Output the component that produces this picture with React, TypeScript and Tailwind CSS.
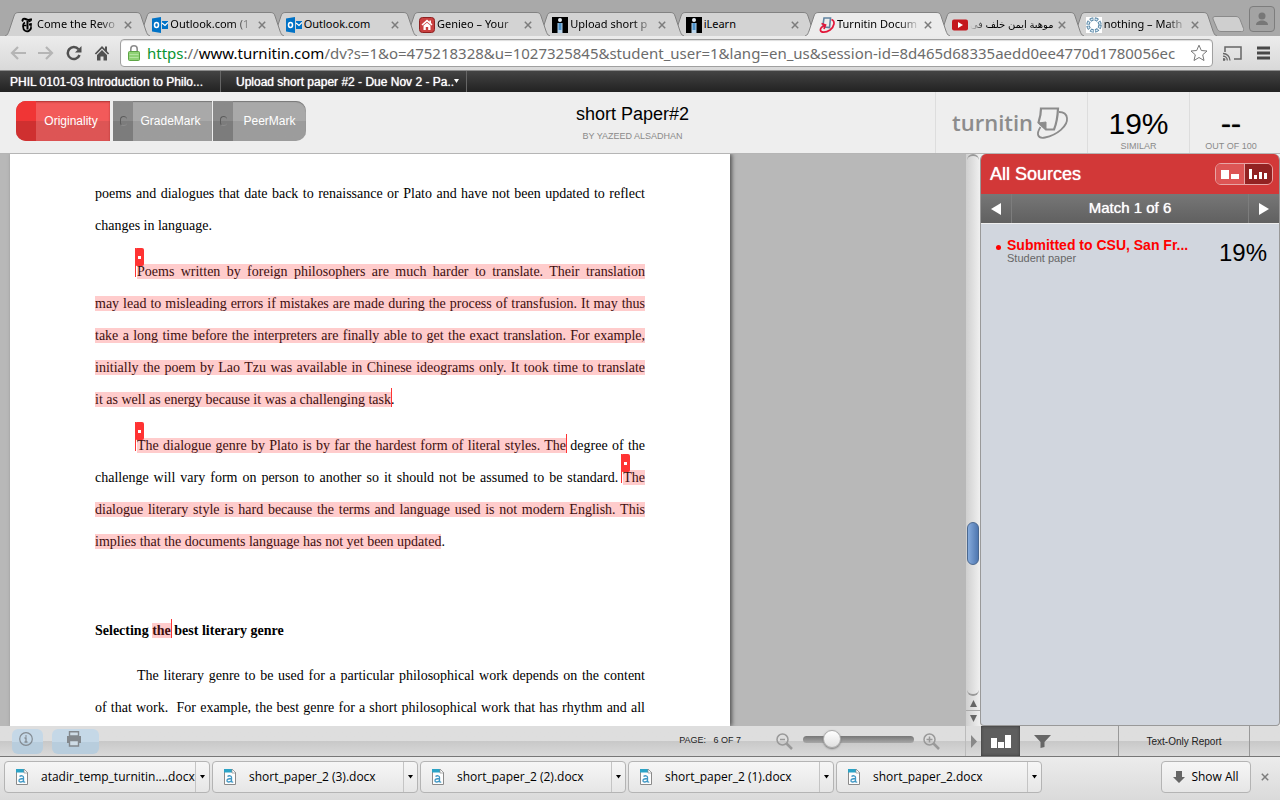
import type { ReactNode } from "react";
import clsx from "clsx";

/* ---------- Favicons ---------- */

const TimesIcon = () => (
  <svg width="16" height="16" viewBox="0 0 16 16" fill="none" stroke="#000">
    <path d="M4 4.500C2.500 2.500 4.500 1 6.500 2s4 1.800 5.500 0" strokeWidth="2" />
    <path d="M12.300 1.500c.6 2.200-.8 3.200-2.800 3" strokeWidth="1.200" />
    <path d="M8.500 4v8.500M10 7.500h2.500" strokeWidth="2" />
    <path d="M6 5.500c-2.600 1.200-2.600 6.500.2 8.300 2.300 1.200 5.500 0 6-3.300" strokeWidth="1.800" />
    <path d="M4.500 8.500h3M12 6v5" strokeWidth="1.300" />
  </svg>
);

const OutlookIcon = () => (
  <svg width="16" height="16" viewBox="0 0 16 16">
    <path d="M0 1.500 9 0v16L0 14.500z" fill="#0072c6" />
    <ellipse cx="4.500" cy="8" rx="2" ry="2.500" fill="none" stroke="#fff" strokeWidth="1.500" />
    <path d="M10 4h6v8h-6z" fill="#0072c6" />
    <path d="m10 6 3 2.500L16 5.500" fill="none" stroke="#fff" strokeWidth="1.200" />
  </svg>
);

const GenieoIcon = () => (
  <svg width="16" height="16" viewBox="0 0 16 16">
    <rect x=".5" y=".5" width="15" height="15" rx="3" fill="#c94040" stroke="#8d2020" />
    <path d="M8 2.500 2.500 7.500l1 1L8 4.700l4.500 3.800 1-1L12 6V3.500h-1.500v1.200z" fill="#fff" />
    <path d="M4.500 8.500 8 5.700l3.500 2.800V13h-2.300v-3H6.800v3H4.500z" fill="#fff" />
  </svg>
);

const ILearnIcon = () => (
  <svg width="16" height="16" viewBox="0 0 16 16">
    <path d="M0 0h16v16H0z" fill="#000" />
    <circle cx="8" cy="3" r="2" fill="#e8eef4" />
    <path d="M5.500 6h5v10h-5z" fill="#b9d4ea" />
    <path d="M6.500 6h3v7h-3z" fill="#4c93cc" />
  </svg>
);

const TurnitinIcon = () => (
  <svg width="16" height="16" viewBox="0 0 16 16" fill="none">
    <path d="M5 1h6.500l-1 9.500-5-.5L4 8l1-7z" stroke="#5f83a0" strokeWidth="1.600" />
    <path d="M12.500 2.500c4 1.500 3 7-1.500 10.500-4.500 3-9 2.500-9.500.5C1 11.500 3 9.500 6.500 8M2.500 6.500 6.500 8 5 12" stroke="#e2173a" strokeWidth="1.700" />
  </svg>
);

const YoutubeIcon = () => (
  <svg width="16" height="16" viewBox="0 0 16 16">
    <rect y="2.500" width="16" height="11" rx="2" fill="#c4171d" />
    <path d="m6 5 5 3-5 3z" fill="#fff" />
  </svg>
);

const MathIcon = () => (
  <svg width="16" height="16" viewBox="0 0 16 16" fill="none">
    <path d="M0 0h16v16H0z" fill="#fff" />
    <circle cx="8" cy="8" r="6" stroke="#5a87a6" strokeWidth="3.500" strokeDasharray="3.400 1.312" />
    <circle cx="8" cy="8" r="6" stroke="#d9eaf4" strokeWidth="1.500" strokeDasharray="2 2.712" strokeDashoffset="-.7" />
  </svg>
);

const DocIcon = () => (
  <svg width="12" height="16" viewBox="0 0 12 16">
    <path d="M.5.5h8l3 3.500v11.500H.5z" fill="#fdfdfd" stroke="#8a8a8a" />
    <path d="M0 0h8v3.500H0z" fill="#2ba3c6" />
    <path d="M8 0v4h4z" fill="#fff" stroke="#8a8a8a" strokeWidth=".7" />
    <path d="M3.500 7.500c1.500-1.200 4-.9 4 .8v4.500M7.500 9.500c-2.500 0-4.500.6-4.500 2.200 0 1.900 3.300 1.600 4.500 0M7.500 12.500c.3.700 1 .8 1.700.3" fill="none" stroke="#3f97c4" strokeWidth="1.300" />
  </svg>
);

const CloseIcon = () => (
  <svg width="8" height="8" viewBox="0 0 8 8">
    <path d="m.8.800 6.400 6.400m0-6.400L.8 7.200" stroke="#7c7c7c" strokeWidth="1.500" />
  </svg>
);

/* ---------- Browser chrome ---------- */

interface BrowserTab {
  title: string;
  icon: ReactNode;
  z: string;
  active?: boolean;
  rtl?: boolean;
  fade?: boolean;
}

const TABS: BrowserTab[] = [
  { title: "Come the Revo", icon: <TimesIcon />, z: "z-[9]", fade: true },
  { title: "Outlook.com (1", icon: <OutlookIcon />, z: "z-[8]", fade: true },
  { title: "Outlook.com", icon: <OutlookIcon />, z: "z-[7]" },
  { title: "Genieo – Your", icon: <GenieoIcon />, z: "z-[6]", fade: true },
  { title: "Upload short p", icon: <ILearnIcon />, z: "z-[5]", fade: true },
  { title: "iLearn", icon: <ILearnIcon />, z: "z-[4]" },
  { title: "Turnitin Docum", icon: <TurnitinIcon />, z: "z-[10]", active: true, fade: true },
  { title: "موهبة ايمن خلف فى", icon: <YoutubeIcon />, z: "z-[2]", rtl: true },
  { title: "nothing – Math", icon: <MathIcon />, z: "z-[1]", fade: true },
];

function TabEdge({ active, flip }: { active?: boolean; flip?: boolean }) {
  return (
    <svg width="14" height="24" viewBox="0 0 14 24" className={clsx("shrink-0", flip && "-scale-x-100")}>
      <path d="M0 24C3 23 3 21 4 19L9 4C10 1 11 .5 14 .5V24z" fill={active ? "#ececec" : "#d3d3d3"} />
      <path d="M0 24C3 23 3 21 4 19L9 4C10 1 11 .5 14 .5" fill="none" stroke="#828282" />
    </svg>
  );
}

function Tab({ tab }: { tab: BrowserTab }) {
  return (
    <div className={clsx("relative -mr-3 flex h-6 min-w-0 flex-1", tab.z)}>
      <TabEdge active={tab.active} />
      <div
        className={clsx(
          "flex min-w-0 flex-1 items-center border-t border-[#828282]",
          tab.active ? "bg-[#ececec]" : "bg-[#d3d3d3]"
        )}
      >
        {tab.icon}
        <a
          href="#"
          dir={tab.rtl ? "rtl" : "ltr"}
          className={clsx(
            "ml-0.5 min-w-0 flex-1 whitespace-nowrap text-black",
            tab.rtl && "text-[10px] [mask-image:linear-gradient(to_left,#000_80%,transparent)]",
            tab.fade && "[mask-image:linear-gradient(to_right,#000_75%,transparent)]"
          )}
        >
          {tab.title}
        </a>
        <button aria-label="Close tab" className="mx-1">
          <CloseIcon />
        </button>
      </div>
      <TabEdge active={tab.active} flip />
    </div>
  );
}

function TabStrip() {
  return (
    <div className="flex h-9 items-end bg-[#a9a9a9] pl-[5px] text-[11px]">
      <div className="flex min-w-0 flex-1">
        {TABS.map((tab, i) => (
          <Tab key={i} tab={tab} />
        ))}
      </div>
      <button aria-label="New tab" className="mb-1 ml-[7px] shrink-0">
        <svg width="32" height="16" viewBox="0 0 32 16">
          <path d="M3 .5h21c2 0 3 1 4 3l3.500 9c.6 2 0 3-2 3H9c-2 0-3-1-4-3L1 3C.5 1.500 1.500.5 3 .5z" fill="#cfcfcf" stroke="#8a8a8a" />
        </svg>
      </button>
      <button
        aria-label="Profile"
        className="mb-1 ml-[5px] mr-[5px] flex size-[26px] shrink-0 items-center justify-center rounded-sm border border-[#7d7d7d] bg-[#a3a3a3]"
      >
        <svg width="14" height="14" viewBox="0 0 14 14" fill="#777">
          <circle cx="7" cy="4" r="3.500" />
          <path d="M1 13c0-6 12-6 12 0z" />
        </svg>
      </button>
    </div>
  );
}

function Toolbar() {
  return (
    <div className="flex h-[35px] items-center border-b border-[#8c8c8c] bg-linear-to-b from-[#ececec] to-[#d9d9d9] px-2.5">
      <button aria-label="Back" className="mr-3">
        <svg width="16" height="14" viewBox="0 0 16 14" fill="none" stroke="#b5b5b5" strokeWidth="2.200">
          <path d="M8 1 2 7l6 6M2 7h14" />
        </svg>
      </button>
      <button aria-label="Forward" className="mr-3">
        <svg width="16" height="14" viewBox="0 0 16 14" fill="none" stroke="#b5b5b5" strokeWidth="2.200">
          <path d="m8 1 6 6-6 6M14 7H0" />
        </svg>
      </button>
      <button aria-label="Reload" className="mr-3">
        <svg width="16" height="16" viewBox="0 0 16 16">
          <path d="M12.500 4.300A6 6 0 1 0 13.500 10" fill="none" stroke="#505050" strokeWidth="2.500" />
          <path d="M15.500 1v6.500H9z" fill="#505050" />
        </svg>
      </button>
      <button aria-label="Home" className="mr-2.5">
        <svg width="16" height="16" viewBox="0 0 16 16" fill="#505050">
          <path d="M8 1 .8 8.500l1.200 1L8 3.500l6 6 1.200-1L13 6.200V1.500h-2v2.600z" />
          <path d="M8 5 3 10v5.500h3.500v-4h3v4H13V10z" />
        </svg>
      </button>
      <div className="flex h-7 min-w-0 flex-1 items-center rounded-sm border border-[#a0a0a0] bg-white pl-[7px] pr-1 shadow-[inset_0_1px_1px_#ddd]">
        <svg width="12" height="16" viewBox="0 0 12 16" className="shrink-0">
          <path d="M2.800 7V4a3.200 3.200 0 0 1 6.400 0v3" fill="none" stroke="#8d8d8d" strokeWidth="1.600" />
          <rect x=".5" y="6.500" width="11" height="9" rx="1" fill="#8fd175" stroke="#5da545" />
          <path d="M1.500 9.500h9m-9 3h9" stroke="#b4e4a0" />
        </svg>
        <a href="#" className="ml-[7px] min-w-0 flex-1 whitespace-nowrap text-[15px] text-[#6c6c6c]">
          <span className="text-[#0a9432]">https</span>://<span className="text-black">www.turnitin.com</span>
          /dv?s=1&amp;o=475218328&amp;u=1027325845&amp;student_user=1&amp;lang=en_us&amp;session-id=8d465d68335aedd0ee4770d1780056ec
        </a>
        <button aria-label="Bookmark" className="shrink-0">
          <svg width="18" height="18" viewBox="0 0 18 18">
            <path d="m9 1.200 2.300 5.300 5.700.5-4.300 3.800 1.300 5.700L9 13.500l-5 3 1.300-5.700L1 7l5.700-.5z" fill="#fff" stroke="#777" strokeLinejoin="round" />
          </svg>
        </button>
      </div>
      <button aria-label="Cast" className="ml-2.5">
        <svg width="19" height="15" viewBox="0 0 19 15" fill="none" stroke="#666" strokeWidth="1.500">
          <path d="M2 6V1h16v12h-7" />
          <path d="M0 7.500a7 7 0 0 1 7 7M0 10.200a4.300 4.300 0 0 1 4.300 4.300" strokeWidth="1.300" />
          <circle cx="1" cy="13.500" r=".7" />
        </svg>
      </button>
      <button aria-label="Menu" className="ml-[15px]">
        <svg width="13" height="14" viewBox="0 0 13 14">
          <path d="M0 2h13M0 7h13M0 12h13" stroke="#484848" strokeWidth="3" />
        </svg>
      </button>
    </div>
  );
}

/* ---------- Document viewer header ---------- */

function CourseBar() {
  return (
    <nav className="flex h-[21px] items-center bg-linear-to-b from-[#444] to-[#222] text-xs text-white text-shadow-[0_0_1px_#fff]">
      <a href="#" className="flex h-full w-[221px] items-center border-r border-[#666] pl-2.5">
        PHIL 0101-03 Introduction to Philo...
      </a>
      <a href="#" className="flex h-full w-[246px] items-center whitespace-nowrap border-r border-[#666] pl-[15px]">
        Upload short paper #2 - Due Nov 2 - Pa..
        <svg width="5" height="5" viewBox="0 0 5 5" fill="#fff">
          <path d="M0 0h5L2.500 4z" />
        </svg>
      </a>
    </nav>
  );
}

const ModeNotch = () => (
  <span className="flex h-full w-5 items-center justify-center bg-linear-to-b from-[#8a8a8a] from-50% to-[#7c7c7c] to-50%">
    <span className="h-2.5 w-[7px] rounded-sm border border-r-0 border-b-[#8c8c8c] border-l-[#5c5c5c] border-t-[#5c5c5c]" />
  </span>
);

function ModeTabs() {
  return (
    <div className="flex h-10 w-[330px] shrink-0 pl-4 text-xs text-white text-shadow-[0_0_1px_#fff]">
      <button className="mr-[3px] flex w-[94px] overflow-hidden rounded-l-[10px] bg-linear-to-b from-[#f25a5a] from-50% to-[#dd5555] to-50% shadow-[inset_0_1px_2px_#a33]">
        <span className="h-full w-5 bg-linear-to-b from-[#f03535] from-50% to-[#cf3030] to-50%" />
        <span className="flex-1 self-center pr-1 text-center">Originality</span>
      </button>
      <button className="mr-px flex w-[99px] items-center bg-linear-to-b from-[#a9a9a9] from-50% to-[#9c9c9c] to-50% shadow-[inset_0_1px_1px_#777]">
        <ModeNotch />
        <span className="flex-1 pr-1 text-center">GradeMark</span>
      </button>
      <button className="flex w-[93px] items-center overflow-hidden rounded-r-[10px] bg-linear-to-b from-[#a9a9a9] from-50% to-[#9c9c9c] to-50% shadow-[inset_0_1px_1px_#777]">
        <ModeNotch />
        <span className="flex-1 text-center">PeerMark</span>
      </button>
    </div>
  );
}

function PaperHeader() {
  return (
    <header className="flex h-[62px] items-stretch border-b border-[#b5b5b5] bg-[#eee]">
      <div className="pt-[9px]">
        <ModeTabs />
      </div>
      <div className="flex-1 pt-2.5 text-center">
        <h1 className="text-lg leading-6 text-black">short Paper#2</h1>
        <p className="mt-1 text-[9px] leading-3 text-[#8a8a8a]">BY YAZEED ALSADHAN</p>
      </div>
      <div className="flex w-[152px] items-center border-l border-[#ddd] pl-4 text-[#8c8c8c]">
        <span className="font-['Open_Sans',sans-serif] text-[22px] font-semibold">turnitin</span>
        <svg width="34" height="34" viewBox="0 0 34 34" fill="none" stroke="#8c8c8c" className="ml-0.5">
          <path d="M6 2.500h17c-.3 7-1.500 15-4 21h-8L3.500 16.500C5 12 6 7 6 2.500z" strokeWidth="2.200" />
          <path d="m3.500 17 7.500-1v8z" fill="#8c8c8c" strokeWidth="1" />
          <path d="M5.500 21C1 28 2.500 33 10 31.500 22 29 33 20 32 12c-.5-4-4-6-8-6" strokeWidth="1.800" />
        </svg>
      </div>
      <div className="w-[102px] border-l border-[#ddd] pt-3.5 text-center">
        <p className="text-3xl leading-9 text-black">19%</p>
        <p className="text-[9px] leading-2 text-[#8a8a8a]">SIMILAR</p>
      </div>
      <div className="w-[91px] border-l border-[#ddd] pt-3.5 pr-2 text-center">
        <p className="text-3xl leading-9 text-black text-shadow-[0_0_1px_#000]">--</p>
        <p className="text-[9px] leading-2 text-[#8a8a8a]">OUT OF 100</p>
      </div>
    </header>
  );
}

/* ---------- Paper ---------- */

const Mark = ({ children }: { children: ReactNode }) => (
  <mark className="bg-[#ffcccc] text-[#3d0f0f]">{children}</mark>
);

// Flag standing at the start of a match
const Flag = () => (
  <span className="relative">
    <span className="absolute -left-0.5 -top-4 h-[29px] border-l border-[#f33]" />
    <span className="absolute -left-0.5 -top-4 flex h-[18px] w-[9px] items-center justify-center rounded-xs bg-[#f33]">
      <span className="size-[3px] bg-white" />
    </span>
  </span>
);

// Thin rule closing a match
const End = () => (
  <span className="relative">
    <span className="absolute -top-1 left-0 h-[19px] border-l border-[#f33]" />
  </span>
);

const Line = ({ children, indent, last }: { children: ReactNode; indent?: boolean; last?: boolean }) => (
  <span className={clsx("block whitespace-nowrap", !last && "[text-align-last:justify]", indent && "pl-[42px]")}>
    {children}
  </span>
);

function Paper() {
  return (
    <main className="min-w-0 flex-1 overflow-hidden bg-[#b8b8b8] pl-2.5">
      <article className="h-full w-[720px] space-y-3.5 bg-white px-[85px] pt-6 font-['Liberation_Serif',serif] text-sm leading-8 text-black shadow-[2px_0_4px_#555]">
        <p>
          <Line>poems and dialogues that date back to renaissance or Plato and have not been updated to reflect</Line>
          <Line last>changes in language.</Line>
        </p>
        <p>
          <Line indent>
            <Flag />
            <Mark>Poems written by foreign philosophers are much harder to translate. Their translation</Mark>
          </Line>
          <Line>
            <Mark>may lead to misleading errors if mistakes are made during the process of transfusion. It may thus</Mark>
          </Line>
          <Line>
            <Mark>take a long time before the interpreters are finally able to get the exact translation. For example,</Mark>
          </Line>
          <Line>
            <Mark>initially the poem by Lao Tzu was available in Chinese ideograms only. It took time to translate</Mark>
          </Line>
          <Line last>
            <Mark>it as well as energy because it was a challenging task</Mark>
            <End />.
          </Line>
        </p>
        <p>
          <Line indent>
            <Flag />
            <Mark>The dialogue genre by Plato is by far the hardest form of literal styles. The</Mark>
            <End /> degree of the
          </Line>
          <Line>
            challenge will vary form on person to another so it should not be assumed to be standard. <Flag />
            <Mark>The</Mark>
          </Line>
          <Line>
            <Mark>dialogue literary style is hard because the terms and language used is not modern English. This</Mark>
          </Line>
          <Line last>
            <Mark>implies that the documents language has not yet been updated</Mark>.
          </Line>
        </p>
        <h2 className="pt-11 leading-[30px] font-bold">
          Selecting <Mark>the</Mark>
          <End /> best literary genre
        </h2>
        <p>
          <Line indent>The literary genre to be used for a particular philosophical work depends on the content</Line>
          <Line>of that work.&nbsp; For example, the best genre for a short philosophical work that has rhythm and all</Line>
        </p>
      </article>
    </main>
  );
}

function ScrollTrack() {
  return (
    <div className="flex w-3.5 shrink-0 flex-col items-center bg-linear-to-r from-[#cfcfcf] to-[#f0f0f0]">
      <span className="h-1.5 w-3 rounded-t-full border-t-2 border-[#999]" />
      <span className="mt-[362px] h-[43px] w-3 rounded-md border border-[#4a6890] bg-linear-to-r from-[#86abdc] to-[#4f77b0]" />
      <span className="mt-auto h-1.5 w-3 rounded-b-full border-b-2 border-[#999]" />
      <button aria-label="Scroll up" className="flex h-[15px] w-full items-center justify-center border-b border-[#aaa]">
        <svg width="7" height="7" viewBox="0 0 7 7" fill="#666">
          <path d="M3.500 0 7 7H0z" />
        </svg>
      </button>
      <button aria-label="Scroll down" className="flex h-[15px] w-full items-center justify-center">
        <svg width="7" height="7" viewBox="0 0 7 7" fill="#666">
          <path d="M3.500 7 7 0H0z" />
        </svg>
      </button>
    </div>
  );
}

function Sources() {
  return (
    <aside className="flex w-[300px] shrink-0 flex-col overflow-hidden rounded-t-md rounded-b-sm border-x border-b border-[#999] bg-[#d1d6de]">
      <div className="flex h-10 items-center justify-between bg-[#d23838] pl-[9px] pr-1.5">
        <h2 className="text-lg text-white text-shadow-[0_0_1px_#fff]">All Sources</h2>
        <div className="flex h-[22px] w-[58px] overflow-hidden rounded-md border border-[#e8a5a5]">
          <button aria-label="Match overview" className="flex flex-1 items-center justify-center bg-[#dd5555]">
            <svg width="18" height="9" viewBox="0 0 18 9" fill="#fff">
              <path d="M0 0h8v9H0zM10 4h8v5h-8z" />
            </svg>
          </button>
          <button aria-label="All sources" className="flex flex-1 items-center justify-center border-l border-[#e8a5a5] bg-[#922222]">
            <svg width="18" height="10" viewBox="0 0 18 10" fill="#fff">
              <path d="M0 0h3v10H0zM5 6h3v4H5zM10 3h3v7h-3zM15 4h3v6h-3z" />
            </svg>
          </button>
        </div>
      </div>
      <div className="flex h-[30px] items-stretch border-b border-[#eee] bg-linear-to-b from-[#777] to-[#606060] text-white">
        <button aria-label="Previous match" className="flex w-[31px] items-center justify-center border-r border-[#7d7d7d]">
          <svg width="10" height="12" viewBox="0 0 10 12" fill="#fff">
            <path d="M10 0v12L0 6z" />
          </svg>
        </button>
        <span className="flex-1 self-center text-center text-[15px] text-shadow-[0_0_1px_#fff]">Match 1 of 6</span>
        <button aria-label="Next match" className="flex w-[31px] items-center justify-center border-l border-[#7d7d7d]">
          <svg width="10" height="12" viewBox="0 0 10 12" fill="#fff">
            <path d="M0 0v12l10-6z" />
          </svg>
        </button>
      </div>
      <div className="flex items-start pl-[15px] pr-3 pt-[13px]">
        <span className="mt-2 mr-1.5 size-[5px] rounded-full bg-[#f00]" />
        <div className="flex-1">
          <a href="#" className="block text-sm leading-4 font-bold text-[#f00]">
            Submitted to CSU, San Fr...
          </a>
          <p className="text-[11px] leading-[10px] text-[#666]">Student paper</p>
        </div>
        <span className="text-2xl text-black">19%</span>
      </div>
    </aside>
  );
}

/* ---------- Bottom bars ---------- */

const Magnifier = ({ plus }: { plus?: boolean }) => (
  <svg width="17" height="17" viewBox="0 0 17 17" fill="none" stroke="#999">
    <circle cx="6.500" cy="6.500" r="5.500" strokeWidth="1.500" />
    <path d="m10.500 10.500 5.500 5.500" strokeWidth="2.500" />
    <path d={plus ? "M3.500 6.500h6M6.500 3.500v6" : "M4 6.500h5"} strokeWidth="1.500" />
  </svg>
);

function StatusBar() {
  return (
    <div className="flex h-[31px] items-stretch border-b border-[#777] bg-linear-to-b from-[#dedede] from-50% via-[#c8c8c8] via-50% to-[#dadada] text-black">
      <div className="flex flex-1 items-center border-r border-[#bbb] pl-3">
        <button
          aria-label="Info"
          className="flex h-[25px] w-[31px] items-center justify-center rounded-md bg-linear-to-b from-[#c5d8e7] from-50% to-[#b8cddd] to-50% pr-1 pb-1"
        >
          <svg width="14" height="14" viewBox="0 0 14 14" fill="none" stroke="#848b92">
            <circle cx="7" cy="7" r="6.300" strokeWidth="1.200" />
            <path d="M5.500 6H7v4M5.500 10h3M7 3.300v1.400" strokeWidth="1.300" />
          </svg>
        </button>
        <button
          aria-label="Print"
          className="ml-[9px] flex h-[25px] w-[47px] items-center justify-center rounded-md bg-linear-to-b from-[#c5d8e7] from-50% to-[#b8cddd] to-50% pr-1 pb-1"
        >
          <svg width="14" height="16" viewBox="0 0 14 16">
            <path d="M0 5h14v7H0z" fill="#83888d" />
            <path d="M2.500.7h9V5h-9zM2.500 9.500h9v5.500h-9z" fill="#cfdce6" stroke="#83888d" strokeWidth="1.400" />
          </svg>
        </button>
        <span className="ml-auto text-[9px] text-[#222]">PAGE:&nbsp;&nbsp; 6 OF 7</span>
        <button aria-label="Zoom out" className="ml-[35px]">
          <Magnifier />
        </button>
        <input
          type="range"
          aria-label="Zoom"
          defaultValue={21}
          className="mb-1 ml-2.5 h-[18px] w-[111px] appearance-none bg-transparent [&::-webkit-slider-runnable-track]:h-[7px] [&::-webkit-slider-runnable-track]:rounded-full [&::-webkit-slider-runnable-track]:bg-linear-to-b [&::-webkit-slider-runnable-track]:from-[#777] [&::-webkit-slider-runnable-track]:to-[#a8a8a8] [&::-webkit-slider-thumb]:-mt-1.5 [&::-webkit-slider-thumb]:size-[18px] [&::-webkit-slider-thumb]:appearance-none [&::-webkit-slider-thumb]:rounded-full [&::-webkit-slider-thumb]:border [&::-webkit-slider-thumb]:border-[#aaa] [&::-webkit-slider-thumb]:bg-linear-to-b [&::-webkit-slider-thumb]:from-white [&::-webkit-slider-thumb]:to-[#e0e0e0] [&::-webkit-slider-thumb]:shadow-[0_1px_2px_#777]"
        />
        <button aria-label="Zoom in" className="ml-[9px] mr-[25px]">
          <Magnifier plus />
        </button>
      </div>
      <button aria-label="Collapse panel" className="flex w-[15px] items-center justify-center">
        <svg width="6" height="13" viewBox="0 0 6 13" fill="#888">
          <path d="M0 0v13l6-6.500z" />
        </svg>
      </button>
      <button aria-label="Sources" className="flex w-[39px] items-center justify-center bg-[#5e5e5e] shadow-[inset_0_0_3px_#333]">
        <svg width="20" height="13" viewBox="0 0 20 13" fill="#fff">
          <path d="M0 3h6v10H0zM7 7h6v6H7zM14 0h6v13h-6z" />
        </svg>
      </button>
      <button aria-label="Filter" className="flex w-[99px] items-center border-r border-[#999] pl-3.5">
        <svg width="17" height="13" viewBox="0 0 17 13" fill="#666">
          <path d="M0 0h17l-6.500 7v5l-4 1V7z" />
        </svg>
      </button>
      <button className="w-[131px] border-r border-[#999] text-[10px] text-[#222]">Text-Only Report</button>
      <span className="w-[30px]" />
    </div>
  );
}

const DOWNLOADS = [
  "atadir_temp_turnitin....docx",
  "short_paper_2 (3).docx",
  "short_paper_2 (2).docx",
  "short_paper_2 (1).docx",
  "short_paper_2.docx",
];

function DownloadShelf() {
  return (
    <footer className="flex h-[43px] items-start gap-0.5 bg-linear-to-b from-[#ececec] to-[#dadada] pl-1 pt-1 text-xs text-black">
      {DOWNLOADS.map((name) => (
        <div
          key={name}
          className="flex h-8 w-[206px] rounded-sm border border-[#b4b4b4] bg-linear-to-b from-[#f6f6f6] to-[#e6e6e6]"
        >
          <button className="flex min-w-0 flex-1 items-center gap-[13px] whitespace-nowrap pl-[11px]">
            <DocIcon />
            {name}
          </button>
          <button aria-label="Download options" className="flex w-3.5 items-center justify-center border-l border-[#c4c4c4]">
            <svg width="5" height="4" viewBox="0 0 5 4">
              <path d="M0 0h5L2.500 3.500z" />
            </svg>
          </button>
        </div>
      ))}
      <button className="ml-auto flex h-8 w-[90px] items-center justify-center gap-1.5 rounded-sm border border-[#b4b4b4] bg-linear-to-b from-[#f6f6f6] to-[#e6e6e6]">
        <svg width="12" height="12" viewBox="0 0 12 12" fill="#666">
          <path d="M3 0h6v6h3l-6 6-6-6h3z" />
        </svg>
        Show All
      </button>
      <button aria-label="Close downloads" className="ml-2 mr-[11px] h-8">
        <CloseIcon />
      </button>
    </footer>
  );
}

export default function App() {
  return (
    <div className="flex h-screen flex-col overflow-hidden font-['Liberation_Sans',sans-serif]">
      <div className="shrink-0 font-['Noto_Sans','DejaVu_Sans',sans-serif]">
        <TabStrip />
        <Toolbar />
      </div>
      <div className="shrink-0">
        <CourseBar />
        <PaperHeader />
      </div>
      <div className="flex min-h-0 flex-1 bg-[#eee]">
        <Paper />
        <ScrollTrack />
        <Sources />
      </div>
      <div className="shrink-0">
        <StatusBar />
        <div className="font-['Open_Sans',sans-serif]">
          <DownloadShelf />
        </div>
      </div>
    </div>
  );
}
